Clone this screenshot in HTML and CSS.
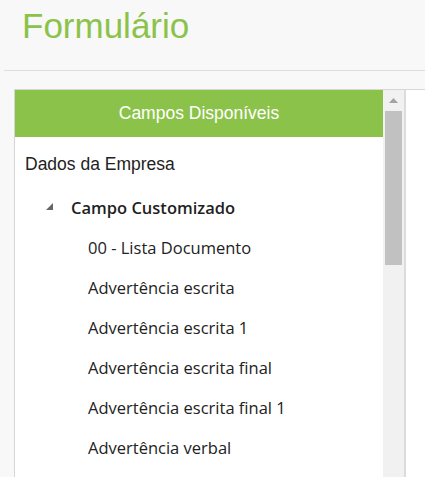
FILE: index.html
```html
<!DOCTYPE html>
<html lang="pt">
<head>
<meta charset="utf-8">
<title>Formulário</title>
<link rel="stylesheet" href="styles.css">
</head>
<body>
<header class="page-header">
  <h1 class="title">Formulário</h1>
</header>
<main class="panel">
  <div class="listbox">
    <div class="tree">
      <div class="tree-header">Campos Disponíveis</div>
      <ul class="tree-body">
        <li class="node root">Dados da Empresa</li>
        <li class="node group">
          <svg class="toggle" width="7" height="7" viewBox="0 0 7 7"><polygon points="7,0 7,7 0,7"/></svg>
          <span>Campo Customizado</span>
        </li>
        <li class="node leaf">00 - Lista Documento</li>
        <li class="node leaf">Advertência escrita</li>
        <li class="node leaf">Advertência escrita 1</li>
        <li class="node leaf">Advertência escrita final</li>
        <li class="node leaf">Advertência escrita final 1</li>
        <li class="node leaf">Advertência verbal</li>
      </ul>
    </div>
    <div class="scrollbar">
      <div class="scroll-btn"><svg width="9" height="5" viewBox="0 0 9 5"><polygon points="4.5,0 9,5 0,5"/></svg></div>
      <div class="scroll-thumb"></div>
    </div>
  </div>
</main>
</body>
</html>
```
FILE: styles.css
```css
html, body {
  margin: 0;
  padding: 0;
}
body {
  background: #f8f8f8;
  height: 477px;
  overflow: hidden;
  font-family: "Liberation Sans", Arial, sans-serif;
}
.page-header {
  margin-left: 4px;
  height: 71px;
  border-bottom: 1px solid #dedede;
  box-sizing: border-box;
  padding-left: 18px;
  padding-top: 6px;
}
.title {
  margin: 0;
  font-weight: normal;
  font-size: 35px;
  line-height: 40px;
  color: #8bc34a;
}
.panel {
  margin-top: 18px;
  margin-left: 14px;
  background: #fff;
  border-top: 1px solid #d6d6d6;
  border-left: 1px solid #d6d6d6;
  height: 387px;
}
.listbox {
  display: flex;
  width: 389px;
  height: 100%;
  border-right: 2px solid #dcdcdc;
}
.tree {
  width: 368px;
  flex: none;
}
.tree-header {
  background: #8bc34a;
  color: #fff;
  height: 47px;
  line-height: 46px;
  text-align: center;
  font-size: 17.5px;
}
.tree-body {
  list-style: none;
  margin: 0;
  padding: 7px 0 0 0;
}
.node {
  height: 40px;
  line-height: 40px;
  white-space: nowrap;
  color: #222;
}
.root {
  padding-left: 10px;
  font-size: 17.5px;
}
.group {
  margin-top: 4px;
  padding-left: 31px;
  display: flex;
  align-items: center;
  font-family: "Open Sans", "Noto Sans", sans-serif;
  font-weight: 600;
  font-size: 16.5px;
  color: #1f1f1f;
}
.toggle {
  fill: #666;
  margin-right: 18px;
  margin-top: -4px;
}
.leaf {
  padding-left: 73px;
  font-family: "Open Sans", "Noto Sans", sans-serif;
  font-size: 16.5px;
  color: #222;
}
.scrollbar {
  width: 21px;
  flex: none;
  background: #f1f1f1;
}
.scroll-btn {
  height: 21px;
  display: flex;
  align-items: center;
  justify-content: center;
  fill: #a3a3a3;
}
.scroll-thumb {
  margin-left: 2px;
  width: 17px;
  height: 154px;
  background: #c1c1c1;
}
```
